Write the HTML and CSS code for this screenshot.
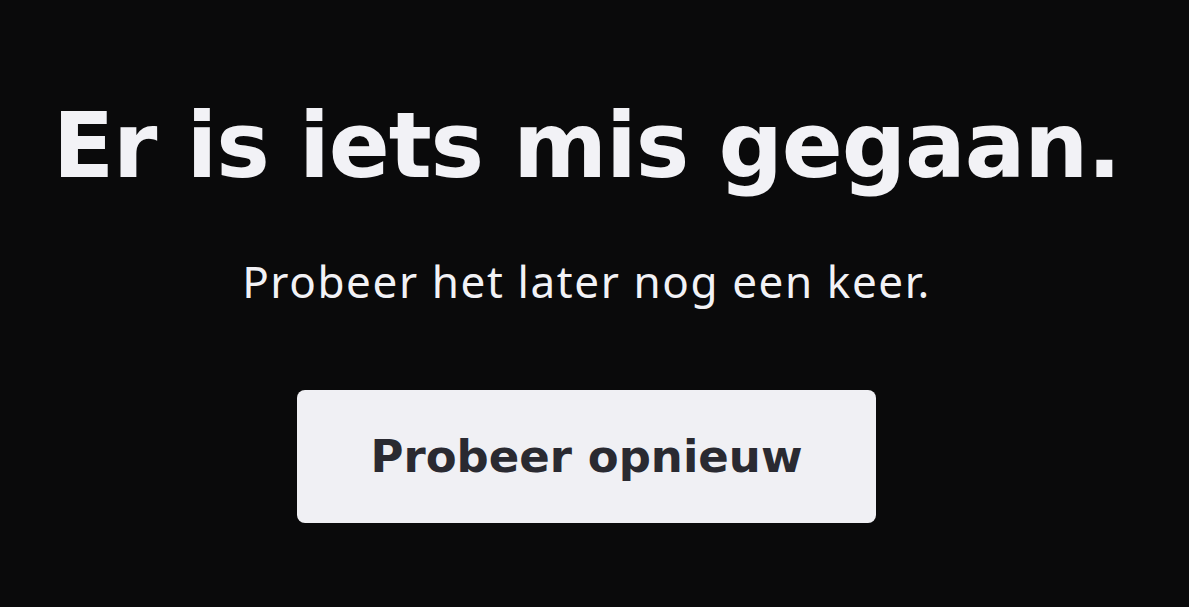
FILE: index.html
```html
<!DOCTYPE html>
<html lang="nl">
<head>
<meta charset="utf-8">
<link rel="stylesheet" href="styles.css">
</head>
<body>
<main class="error">
  <h1 class="error-title">Er is iets mis gegaan.</h1>
  <p class="error-text">Probeer het later nog een keer.</p>
  <button class="error-button" type="button">Probeer opnieuw</button>
</main>
</body>
</html>
```

FILE: styles.css
```css
html, body {
  margin: 0;
  padding: 0;
  height: 100%;
  background: #0a0a0b;
}
.error {
  height: 100%;
  display: flex;
  flex-direction: column;
  align-items: center;
  justify-content: flex-start;
  padding: 96px 16px 0 0;
  box-sizing: border-box;
}
.error-title {
  margin: 0;
  font-family: "DejaVu Sans", sans-serif;
  font-weight: 700;
  font-size: 90px;
  line-height: 100px;
  color: #f2f2f6;
  letter-spacing: -1.1px;
}
.error-text {
  margin: 55px 0 0;
  font-family: "Noto Sans", sans-serif;
  font-size: 44px;
  line-height: 60px;
  letter-spacing: 1.6px;
  color: #f2f2f6;
}
.error-button {
  margin-top: 79px;
  width: 579px;
  height: 133px;
  border: none;
  border-radius: 8px;
  background: #f0f0f4;
  color: #2a2a31;
  font-family: "DejaVu Sans", sans-serif;
  font-weight: 700;
  font-size: 45px;
  cursor: pointer;
}
```
